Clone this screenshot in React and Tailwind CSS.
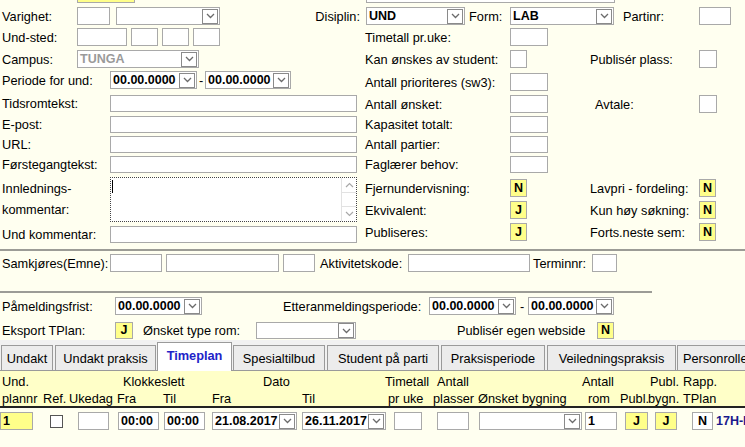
import React from "react";

const Chev = () => (
  <svg width="9" height="6" viewBox="0 0 9 6">
    <path d="M1 1L4.5 4.5L8 1" fill="none" stroke="#6b6b6b" strokeWidth="1.3" />
  </svg>
);

function Inp({ c = "", children }) {
  return (
    <div className={`flex shrink-0 items-center border border-[#a9a9a9] bg-white pl-[2px] text-[12.5px] font-bold ${c}`}>
      {children}
    </div>
  );
}

function Sel({ c = "", text = "", tc = "text-black" }) {
  return (
    <div className={`flex shrink-0 items-center border border-[#a9a9a9] bg-white ${c}`}>
      <span className={`flex-1 overflow-hidden whitespace-nowrap pl-[2px] text-[12.5px] font-bold ${tc}`}>{text}</span>
      <span className="mr-[1px] flex h-[15px] w-[16px] items-center justify-center border border-[#8a8a8a] bg-white">
        <Chev />
      </span>
    </div>
  );
}

function YN({ v, c = "w-[17px] h-[18px]", white = false }) {
  return (
    <div
      className={`flex shrink-0 items-center justify-center border border-[#a9a9a9] text-[12.5px] font-bold ${
        white ? "bg-white" : "bg-[#ffff8a]"
      } ${c}`}
    >
      {v}
    </div>
  );
}

function RRow({ label, c = "", children }) {
  return (
    <div className={`flex items-center whitespace-nowrap ${c}`}>
      <span className="w-[145px] shrink-0">{label}</span>
      {children}
    </div>
  );
}

export default function App() {
  return (
    <div className="h-[447px] w-[745px] overflow-hidden bg-[#fffff0] font-['Liberation_Sans',Arial,sans-serif] text-[12.75px] leading-[15px] text-black">
      {/* partially visible row at top */}
      <div className="flex h-[3px]">
        <div className="ml-[77px] h-[3px] w-[58px] border-x border-b border-[#a9a9a9] bg-[#ffff8a]" />
        <div className="ml-[231px] h-[3px] w-[249px] border-x border-b border-[#a9a9a9] bg-white" />
      </div>

      {/* Varighet / Disiplin row */}
      <div className="mt-[4px] flex h-[18px] items-center whitespace-nowrap">
        <span className="w-[77px] shrink-0 pl-[2px]">Varighet:</span>
        <Inp c="h-[18px] w-[33px]" />
        <Sel c="ml-[6px] h-[18px] w-[104px]" />
        <span className="w-[146px] shrink-0 pr-[6px] text-right">Disiplin:</span>
        <Sel c="h-[18px] w-[99px]" text="UND" />
        <span className="w-[45px] shrink-0 pl-[4px]">Form:</span>
        <Sel c="h-[18px] w-[104px]" text="LAB" />
        <span className="w-[85px] shrink-0 pl-[9px]">Partinr:</span>
        <Inp c="h-[18px] w-[32px]" />
      </div>

      {/* two columns */}
      <div className="mt-[3px] flex">
        {/* left column */}
        <div className="w-[365px] shrink-0 whitespace-nowrap">
          <div className="flex h-[18px] items-center">
            <span className="w-[77px] shrink-0 pl-[2px]">Und-sted:</span>
            <Inp c="h-[18px] w-[50px]" />
            <Inp c="ml-[4px] h-[18px] w-[27px]" />
            <Inp c="ml-[4px] h-[18px] w-[27px]" />
            <Inp c="ml-[4px] h-[18px] w-[27px]" />
          </div>
          <div className="mt-[4px] flex h-[18px] items-center">
            <span className="w-[77px] shrink-0 pl-[2px]">Campus:</span>
            <Sel c="h-[18px] w-[122px]" text="TUNGA" tc="text-[#9a9a9a]" />
          </div>
          <div className="mt-[3px] flex h-[18px] items-center">
            <span className="w-[110px] shrink-0 pl-[2px]">Periode for und:</span>
            <Sel c="h-[18px] w-[87px]" text="00.00.0000" />
            <span className="w-[8px] shrink-0 text-center">-</span>
            <Sel c="h-[18px] w-[86px]" text="00.00.0000" />
          </div>
          <div className="mt-[6px] flex h-[17px] items-center">
            <span className="w-[110px] shrink-0 pl-[2px]">Tidsromtekst:</span>
            <Inp c="h-[17px] w-[247px]" />
          </div>
          <div className="mt-[4px] flex h-[17px] items-center">
            <span className="w-[110px] shrink-0 pl-[2px]">E-post:</span>
            <Inp c="h-[17px] w-[247px]" />
          </div>
          <div className="mt-[3px] flex h-[17px] items-center">
            <span className="w-[110px] shrink-0 pl-[2px]">URL:</span>
            <Inp c="h-[17px] w-[247px]" />
          </div>
          <div className="mt-[3px] flex h-[17px] items-center">
            <span className="w-[110px] shrink-0 pl-[2px]">Førstegangtekst:</span>
            <Inp c="h-[17px] w-[247px]" />
          </div>
          <div className="mt-[4px] flex h-[45px]">
            <div className="flex w-[110px] shrink-0 flex-col justify-between py-[2px] pl-[2px] leading-[20px]">
              <span>Innlednings-</span>
              <span>kommentar:</span>
            </div>
            <div className="flex h-[45px] w-[247px] border border-dotted border-[#444] bg-white">
              <div className="ml-[1px] mt-[2px] h-[13px] w-[1px] bg-black" />
              <div className="flex-1" />
              <div className="flex w-[15px] flex-col justify-between border-l border-[#e2e2e2] bg-white">
                <div className="flex h-[15px] items-center justify-center border-b border-[#e2e2e2]">
                  <svg width="9" height="6" viewBox="0 0 9 6">
                    <path d="M1 5L4.5 1.5L8 5" fill="none" stroke="#a8a8a8" strokeWidth="1.2" />
                  </svg>
                </div>
                <div className="flex h-[15px] items-center justify-center border-t border-[#e2e2e2]">
                  <svg width="9" height="6" viewBox="0 0 9 6">
                    <path d="M1 1L4.5 4.5L8 1" fill="none" stroke="#a8a8a8" strokeWidth="1.2" />
                  </svg>
                </div>
              </div>
            </div>
          </div>
          <div className="mt-[4px] flex h-[17px] items-center">
            <span className="w-[110px] shrink-0 pl-[2px]">Und kommentar:</span>
            <Inp c="h-[17px] w-[247px]" />
          </div>
        </div>

        {/* right column */}
        <div className="flex-1">
          <RRow label="Timetall pr.uke:" c="h-[18px]">
            <Inp c="h-[18px] w-[38px]" />
          </RRow>
          <RRow label="Kan ønskes av student:" c="mt-[4px] h-[18px]">
            <Inp c="h-[18px] w-[17px]" />
            <span className="ml-[63px] w-[109px] shrink-0">Publisér plass:</span>
            <Inp c="h-[18px] w-[18px]" />
          </RRow>
          <RRow label="Antall prioriteres (sw3):" c="mt-[5px] h-[18px]">
            <Inp c="h-[18px] w-[38px]" />
          </RRow>
          <RRow label="Antall ønsket:" c="mt-[4px] h-[18px]">
            <Inp c="h-[18px] w-[38px]" />
            <span className="ml-[47px] w-[104px] shrink-0">Avtale:</span>
            <Inp c="h-[18px] w-[18px]" />
          </RRow>
          <RRow label="Kapasitet totalt:" c="mt-[3px] h-[17px]">
            <Inp c="h-[17px] w-[38px]" />
          </RRow>
          <RRow label="Antall partier:" c="mt-[3px] h-[17px]">
            <Inp c="h-[17px] w-[38px]" />
          </RRow>
          <RRow label="Faglærer behov:" c="mt-[3px] h-[17px]">
            <Inp c="h-[17px] w-[38px]" />
          </RRow>
          <RRow label="Fjernundervisning:" c="mt-[6px] h-[18px]">
            <YN v="N" />
            <span className="ml-[63px] w-[109px] shrink-0">Lavpri - fordeling:</span>
            <YN v="N" />
          </RRow>
          <RRow label="Ekvivalent:" c="mt-[4px] h-[18px]">
            <YN v="J" />
            <span className="ml-[63px] w-[109px] shrink-0">Kun høy søkning:</span>
            <YN v="N" />
          </RRow>
          <RRow label="Publiseres:" c="mt-[4px] h-[18px]">
            <YN v="J" />
            <span className="ml-[63px] w-[109px] shrink-0">Forts.neste sem:</span>
            <YN v="N" />
          </RRow>
        </div>
      </div>

      <div className="mt-[6px] h-[2px] w-[745px] bg-[#9c9c96]" />

      {/* Samkjøres row */}
      <div className="mt-[3px] flex h-[18px] items-center whitespace-nowrap">
        <span className="w-[110px] shrink-0 pl-[2px]">Samkjøres(Emne):</span>
        <Inp c="h-[18px] w-[52px]" />
        <Inp c="ml-[4px] h-[18px] w-[113px]" />
        <Inp c="ml-[4px] h-[18px] w-[32px]" />
        <span className="ml-[5px] w-[88px] shrink-0">Aktivitetskode:</span>
        <Inp c="h-[18px] w-[122px]" />
        <span className="ml-[3px] w-[59px] shrink-0">Terminnr:</span>
        <Inp c="h-[18px] w-[25px]" />
      </div>

      <div className="mt-[19px] h-[2px] w-[652px] bg-[#9c9c96]" />

      {/* Påmeldingsfrist row */}
      <div className="mt-[4px] flex h-[18px] items-center whitespace-nowrap">
        <span className="w-[115px] shrink-0 pl-[2px]">Påmeldingsfrist:</span>
        <Sel c="h-[18px] w-[87px]" text="00.00.0000" />
        <span className="ml-[81px] w-[146px] shrink-0">Etteranmeldingsperiode:</span>
        <Sel c="h-[18px] w-[87px]" text="00.00.0000" />
        <span className="w-[12px] shrink-0 text-center">-</span>
        <Sel c="h-[18px] w-[86px]" text="00.00.0000" />
      </div>

      {/* Eksport row */}
      <div className="mt-[7px] flex h-[17px] items-center whitespace-nowrap">
        <span className="w-[115px] shrink-0 pl-[2px]">Eksport TPlan:</span>
        <YN v="J" c="h-[17px] w-[18px]" />
        <span className="ml-[10px] w-[113px] shrink-0">Ønsket type rom:</span>
        <Sel c="h-[17px] w-[100px]" />
        <span className="ml-[101px] w-[140px] shrink-0">Publisér egen webside</span>
        <YN v="N" c="h-[17px] w-[17px]" />
      </div>

      {/* Tabs */}
      <div className="mt-[1px] flex h-[31px] items-end whitespace-nowrap border-b border-[#9a9a9a] bg-[#f1f1f1]">
        <div className="ml-[1px] flex h-[25px] w-[52px] shrink-0 items-center justify-center border-x border-t border-[#9a9a9a] bg-[#ececec]">Undakt</div>
        <div className="ml-[2px] flex h-[25px] w-[101px] shrink-0 items-center justify-center border-x border-t border-[#9a9a9a] bg-[#ececec]">Undakt praksis</div>
        <div className="mb-[-1px] ml-[1px] flex h-[29px] w-[75px] shrink-0 items-center justify-center border-x border-t border-[#9a9a9a] bg-white pb-[3px] font-bold text-[#2222c8]">Timeplan</div>
        <div className="ml-[1px] flex h-[25px] w-[92px] shrink-0 items-center justify-center border-x border-t border-[#9a9a9a] bg-[#ececec]">Spesialtilbud</div>
        <div className="ml-[2px] flex h-[25px] w-[112px] shrink-0 items-center justify-center border-x border-t border-[#9a9a9a] bg-[#ececec]">Student på parti</div>
        <div className="ml-[2px] flex h-[25px] w-[104px] shrink-0 items-center justify-center border-x border-t border-[#9a9a9a] bg-[#ececec]">Praksisperiode</div>
        <div className="ml-[2px] flex h-[25px] w-[129px] shrink-0 items-center justify-center border-x border-t border-[#9a9a9a] bg-[#ececec]">Veiledningspraksis</div>
        <div className="ml-[1px] flex h-[25px] w-[100px] shrink-0 items-center justify-start border-x border-t border-[#9a9a9a] bg-[#ececec] pl-[5px]">Personroller</div>
      </div>

      {/* Header */}
      <div className="h-[37px] whitespace-nowrap border-b-2 border-[#222] bg-[#ffffc8] pt-[2px] leading-[17px]">
        <div className="flex">
          <span className="w-[123px] shrink-0 pl-[2px]">Und.</span>
          <span className="w-[140px] shrink-0">Klokkeslett</span>
          <span className="w-[122px] shrink-0">Dato</span>
          <span className="w-[52px] shrink-0">Timetall</span>
          <span className="w-[145px] shrink-0">Antall</span>
          <span className="w-[68px] shrink-0">Antall</span>
          <span className="w-[33px] shrink-0">Publ.</span>
          <span className="shrink-0">Rapp.</span>
        </div>
        <div className="flex">
          <span className="w-[43px] shrink-0 pl-[2px]">plannr</span>
          <span className="w-[26px] shrink-0">Ref.</span>
          <span className="w-[48px] shrink-0">Ukedag</span>
          <span className="w-[46px] shrink-0">Fra</span>
          <span className="w-[49px] shrink-0">Til</span>
          <span className="w-[90px] shrink-0">Fra</span>
          <span className="w-[86px] shrink-0">Til</span>
          <span className="w-[45px] shrink-0">pr uke</span>
          <span className="w-[45px] shrink-0">plasser</span>
          <span className="w-[110px] shrink-0">Ønsket bygning</span>
          <span className="w-[32px] shrink-0">rom</span>
          <span className="w-[28px] shrink-0">Publ.</span>
          <span className="w-[35px] shrink-0">bygn.</span>
          <span className="shrink-0">TPlan</span>
        </div>
      </div>

      {/* Data row */}
      <div className="mt-[4px] flex h-[18px] items-center whitespace-nowrap">
        <div className="flex h-[18px] w-[33px] shrink-0 items-center border border-[#a9a9a9] bg-[#ffff8a] pl-[2px] text-[12.5px] font-bold">1</div>
        <div className="ml-[17px] h-[13px] w-[13px] shrink-0 border border-[#555] bg-white" />
        <Inp c="ml-[15px] h-[18px] w-[31px]" />
        <Inp c="ml-[9px] h-[18px] w-[41px]">00:00</Inp>
        <Inp c="ml-[5px] h-[18px] w-[41px]">00:00</Inp>
        <Sel c="ml-[7px] h-[18px] w-[85px]" text="21.08.2017" />
        <Sel c="ml-[5px] h-[18px] w-[84px]" text="26.11.2017" />
        <Inp c="ml-[8px] h-[18px] w-[28px]" />
        <Inp c="ml-[15px] h-[18px] w-[32px]" />
        <Sel c="ml-[10px] h-[18px] w-[103px]" />
        <Inp c="ml-[3px] h-[18px] w-[32px]">1</Inp>
        <YN v="J" c="ml-[8px] h-[18px] w-[23px]" />
        <YN v="J" c="ml-[7px] h-[18px] w-[22px]" />
        <YN v="N" c="ml-[15px] h-[18px] w-[21px]" white />
        <span className="ml-[3px] text-[12.5px] font-bold text-[#1a1a8c]">17H-HVL</span>
      </div>
    </div>
  );
}
